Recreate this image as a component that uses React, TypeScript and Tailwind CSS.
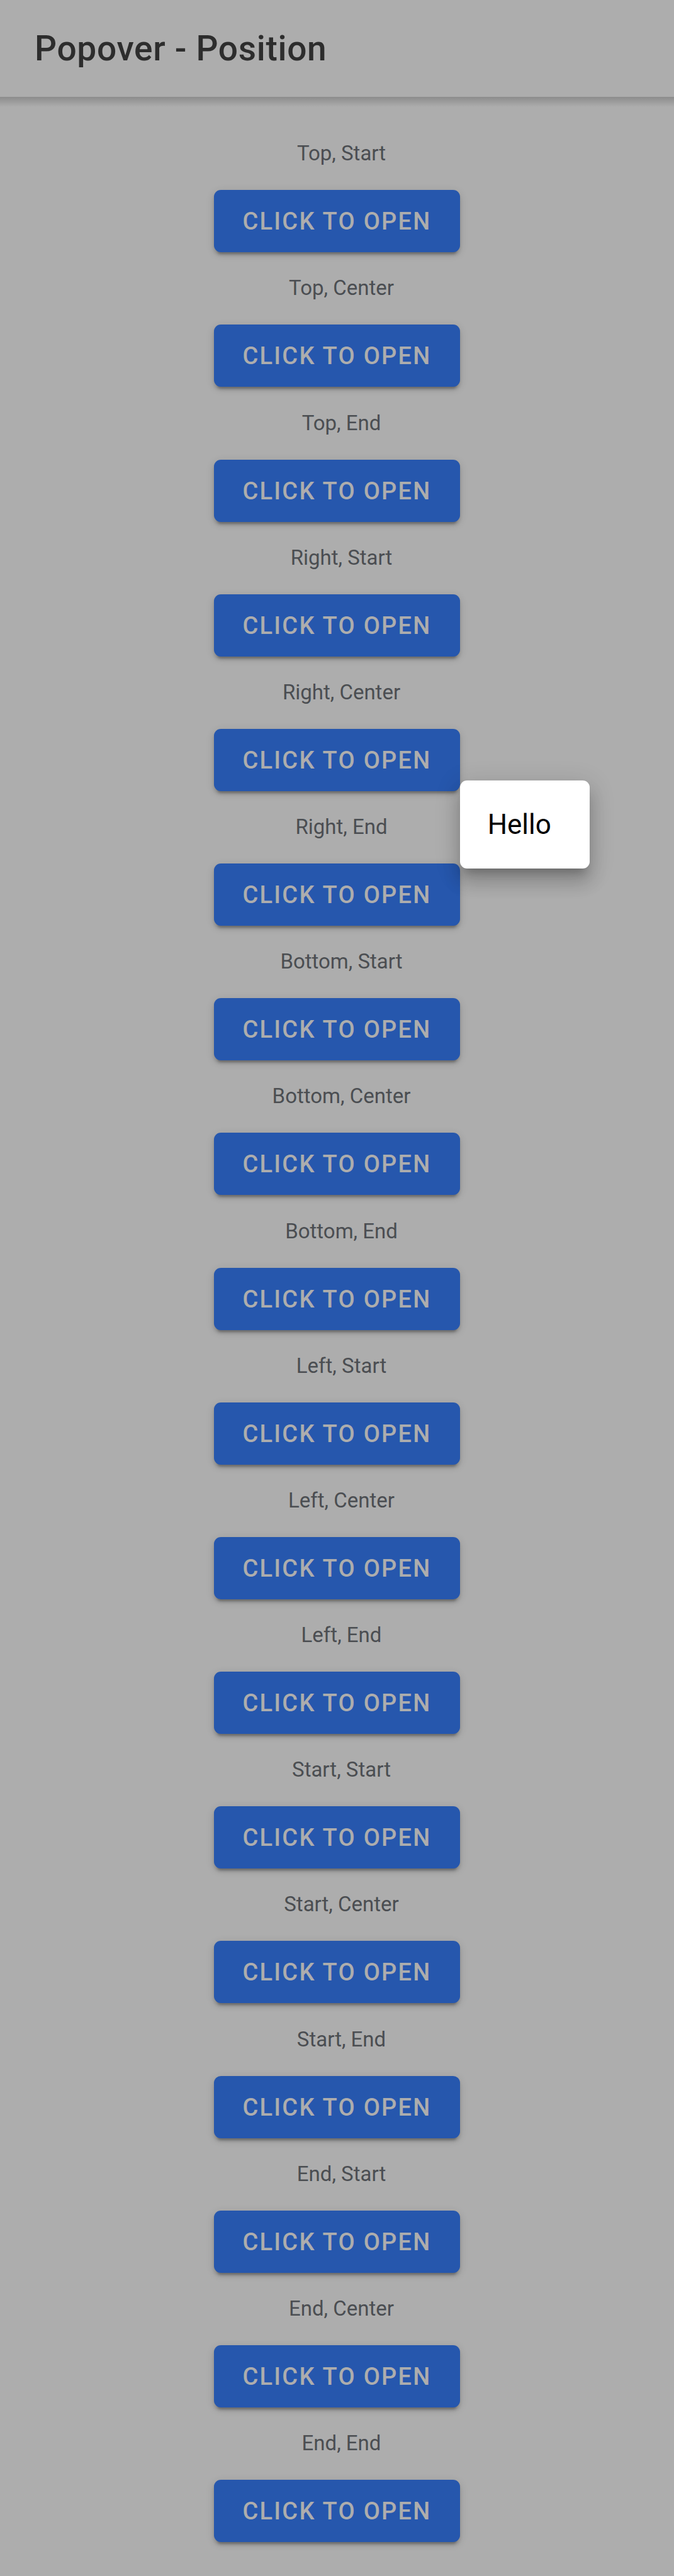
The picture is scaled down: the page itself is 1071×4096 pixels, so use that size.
const positions = [
  'Top, Start',
  'Top, Center',
  'Top, End',
  'Right, Start',
  'Right, Center',
  'Right, End',
  'Bottom, Start',
  'Bottom, Center',
  'Bottom, End',
  'Left, Start',
  'Left, Center',
  'Left, End',
  'Start, Start',
  'Start, Center',
  'Start, End',
  'End, Start',
  'End, Center',
  'End, End',
];

const openPosition = 'Right, End';

function Popover() {
  return (
    <div
      role="dialog"
      aria-label="Popover"
      className="absolute bottom-[91px] left-full z-10 flex h-[140px] w-[206px] items-center rounded-[11px] bg-white pl-11 text-[44px] leading-[66px] text-black shadow-[0_14px_14px_-8px_rgba(0,0,0,0.2),0_22px_27px_3px_rgba(0,0,0,0.14),0_8px_38px_5px_rgba(0,0,0,0.12)]"
    >
      Hello
    </div>
  );
}

function PositionItem({ label }: { label: string }) {
  const isOpen = label === openPosition;
  return (
    <section className="flex flex-col items-center justify-end">
      <h2 className="mb-[38px] pl-[14px] text-[33px] leading-[40px] font-normal text-[#4b4e52]">{label}</h2>
      <div className="relative">
        <button
          type="button"
          aria-haspopup="dialog"
          aria-expanded={isOpen}
          className="block h-[99px] rounded-[11px] bg-[#2657ad] px-[45px] pt-0.5 text-[38px] font-medium tracking-[0.06em] whitespace-nowrap text-[#adadad] uppercase shadow-[0_8px_3px_-5px_rgba(0,0,0,0.2),0_5px_5px_0_rgba(0,0,0,0.14),0_3px_14px_0_rgba(0,0,0,0.12)]"
        >
          Click to open
        </button>
        {isOpen && <Popover />}
      </div>
    </section>
  );
}

export default function App() {
  return (
    <div className="flex min-h-screen flex-col bg-[#adadad] font-[Roboto,sans-serif]">
      <header className="flex h-[154px] shrink-0 items-center px-[55px]">
        <h1 className="text-[55px] leading-[66px] font-medium tracking-[0.0125em] text-[#2d2d2d]">
          Popover - Position
        </h1>
      </header>
      <div className="h-4 shrink-0 bg-linear-to-b from-[#8c8c8c] to-[#adadad]" />
      <main className="grid flex-1 auto-rows-fr pt-[17px] pb-[54px]">
        {positions.map((label) => (
          <PositionItem key={label} label={label} />
        ))}
      </main>
    </div>
  );
}
